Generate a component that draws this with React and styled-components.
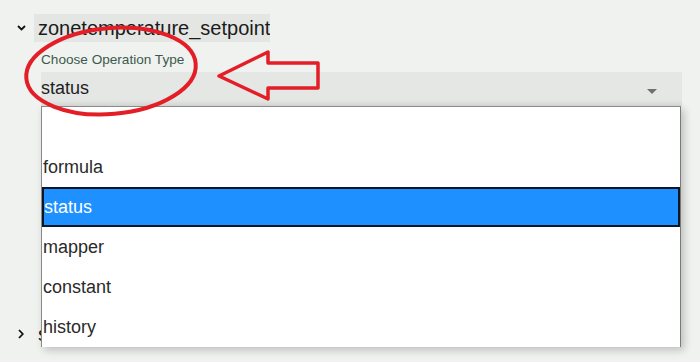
import styled, { createGlobalStyle } from "styled-components";

const GlobalStyle = createGlobalStyle`
  html, body {
    margin: 0;
    padding: 0;
    background: #f0f2f0;
  }
  body {
    font-family: "Liberation Sans", Arial, sans-serif;
    color: #222;
  }
`;

const Page = styled.div`
  position: relative;
  width: 700px;
  height: 362px;
  overflow: hidden;
  padding-top: 14px;
  box-sizing: border-box;
`;

const TreeRow = styled.div`
  display: flex;
  align-items: center;
  height: 28px;
  padding-left: ${(p) => p.$indent}px;
  margin-top: ${(p) => p.$top || 0}px;
`;

const Toggle = styled.span`
  display: flex;
  align-items: center;
  justify-content: center;
  width: 10px;
  height: 28px;
  margin-right: ${(p) => p.$gap}px;
  color: #111;
`;

const Title = styled.span`
  font-size: 20px;
  line-height: 28px;
  padding-left: 4px;
  background: ${(p) => (p.$highlight ? "#e4e6e3" : "transparent")};
  color: #1b1b1b;
  white-space: nowrap;
  overflow: hidden;
  max-width: ${(p) => (p.$clip ? `${p.$clip}px` : "none")};
`;

const Field = styled.div`
  position: relative;
  margin-left: 41px;
  width: 641px;
  margin-top: 10px;
`;

const Label = styled.div`
  font-size: 13.6px;
  line-height: 16px;
  color: #3c5a4b;
  margin-bottom: 4px;
`;

const SelectBox = styled.div`
  display: flex;
  align-items: center;
  justify-content: space-between;
  height: 34px;
  box-sizing: border-box;
  padding-right: 25px;
  padding-bottom: 2px;
  background: linear-gradient(#e5e7e4 0%, #e5e7e4 80%, #dcdedb 100%);
  font-size: 18px;
  color: #1e1e1e;
`;

const Caret = styled.span`
  width: 0;
  height: 0;
  border-left: 5px solid transparent;
  border-right: 5px solid transparent;
  border-top: 5px solid #707070;
  margin-top: 6px;
`;

const Menu = styled.ul`
  position: absolute;
  top: 100%;
  left: 0;
  width: 640px;
  margin: 0;
  padding: 0;
  list-style: none;
  background: #fff;
  border-left: 1px solid #8a8a8a;
  border-right: 1px solid #7a7a7a;
  border-top: 1px solid #8a8a8a;
  box-sizing: border-box;
  box-shadow: 3px 3px 8px rgba(0, 0, 0, 0.22);
  z-index: 5;
`;

const Option = styled.li`
  height: 40px;
  box-sizing: border-box;
  display: flex;
  align-items: center;
  padding-left: ${(p) => (p.$selected ? 0 : 1)}px;
  font-size: 18px;
  color: ${(p) => (p.$selected ? "#fff" : "#2a2a2a")};
  background: ${(p) => (p.$selected ? "#1e90ff" : "#fff")};
  border: ${(p) => (p.$selected ? "2px solid #0b1626" : "none")};
`;

const Annotations = styled.svg`
  position: absolute;
  left: 0;
  top: 0;
  pointer-events: none;
  z-index: 10;
`;

const options = ["", "formula", "status", "mapper", "constant", "history"];

const ChevronDown = () => (
  <svg width="9" height="6" viewBox="0 0 9 6">
    <path d="M1 1 L4.5 4.5 L8 1" fill="none" stroke="#111" strokeWidth="1.8" />
  </svg>
);

const ChevronRight = () => (
  <svg width="6" height="10" viewBox="0 0 6 10">
    <path d="M1 1 L4.8 5 L1 9" fill="none" stroke="#111" strokeWidth="1.8" />
  </svg>
);

export default function App() {
  return (
    <>
      <GlobalStyle />
      <Page>
        <TreeRow $indent={16}>
          <Toggle $gap={8}>
            <ChevronDown />
          </Toggle>
          <Title $highlight>zonetemperature_setpoint</Title>
        </TreeRow>
        <Field>
          <Label>Choose Operation Type</Label>
          <SelectBox>
            <span>status</span>
            <Caret />
          </SelectBox>
          <Menu>
            {options.map((o, i) => (
              <Option key={i} $selected={o === "status"}>
                {o}
              </Option>
            ))}
          </Menu>
        </Field>
        <TreeRow $indent={16} $top={214}>
          <Toggle $gap={8}>
            <ChevronRight />
          </Toggle>
          <Title $clip={7}>schedule_setpoint</Title>
        </TreeRow>
        <Annotations width="700" height="362" viewBox="0 0 700 362">
          <ellipse
            cx="111"
            cy="71"
            rx="85"
            ry="43"
            transform="rotate(-5 111 71)"
            fill="none"
            stroke="#e41e26"
            strokeWidth="4"
          />
          <polygon
            points="219,76 268,52 268,63 318,63 318,88 268,88 268,99"
            fill="none"
            stroke="#e41e26"
            strokeWidth="3.5"
            strokeLinejoin="round"
          />
        </Annotations>
      </Page>
    </>
  );
}
